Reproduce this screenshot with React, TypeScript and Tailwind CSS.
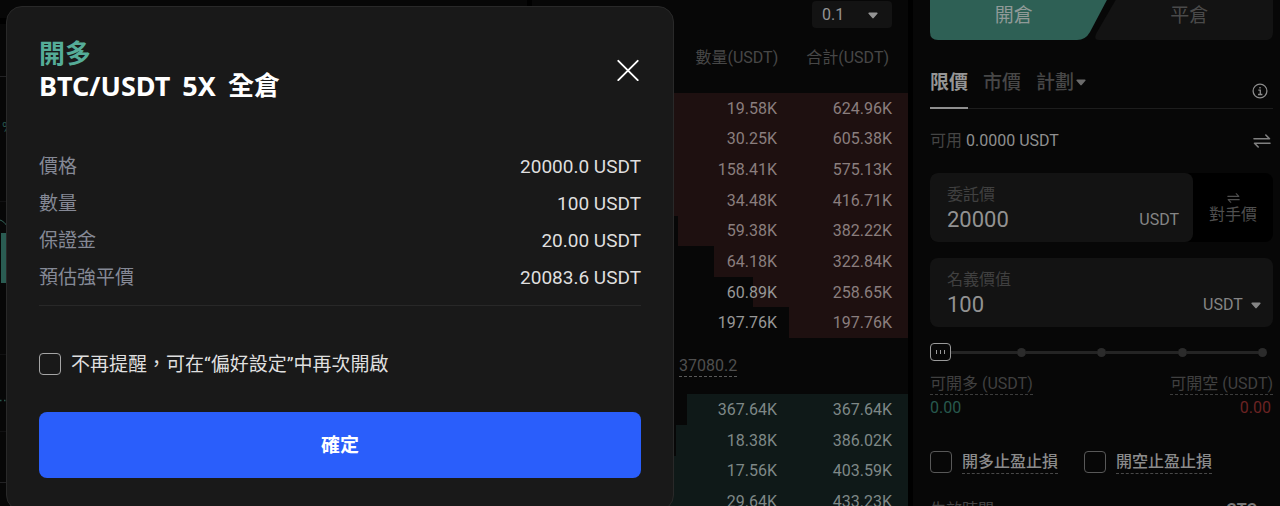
import React, { useId, useState } from 'react';

type Level = { amount: string; total: string; outside?: boolean };

const asks: Level[] = [
  { amount: '19.58K', total: '624.96K' },
  { amount: '30.25K', total: '605.38K' },
  { amount: '158.41K', total: '575.13K' },
  { amount: '34.48K', total: '416.71K' },
  { amount: '59.38K', total: '382.22K' },
  { amount: '64.18K', total: '322.84K' },
  { amount: '60.89K', total: '258.65K', outside: true },
  { amount: '197.76K', total: '197.76K', outside: true },
];

const bids: Level[] = [
  { amount: '367.64K', total: '367.64K' },
  { amount: '18.38K', total: '386.02K' },
  { amount: '17.56K', total: '403.59K' },
  { amount: '29.64K', total: '433.23K' },
];

const DEPTH_SCALE = 626;

function Caret({ className }: { className: string }) {
  return (
    <svg viewBox="0 0 10 7" className={className} fill="currentColor" aria-hidden="true">
      <path d="M1.2 0.4h7.6c.8 0 1.1.8.6 1.4L5.7 6.1c-.4.5-1 .5-1.4 0L.6 1.8C.1 1.2.4.4 1.2.4z" />
    </svg>
  );
}

function SwapIcon({ className, stroke }: { className: string; stroke: number }) {
  return (
    <svg
      viewBox="0 0 18 14"
      className={className}
      fill="none"
      stroke="currentColor"
      strokeWidth={stroke}
      strokeLinecap="round"
      strokeLinejoin="round"
      aria-hidden="true"
    >
      <path d="M1 4.700h15.500L12.800 1" />
      <path d="M17 9.300H1.500L5.200 13" />
    </svg>
  );
}

function CheckBox({ className, id }: { className: string; id: string }) {
  return (
    <input
      type="checkbox"
      id={id}
      className={`size-[22px] shrink-0 appearance-none rounded border bg-transparent checked:bg-[#2a5efb] ${className}`}
    />
  );
}

function DepthTable({ levels, side, className }: { levels: Level[]; side: 'ask' | 'bid'; className: string }) {
  const fill = side === 'ask' ? '#1e1010' : '#0f1918';
  const dim = side === 'ask' ? 'text-[#8a7e7e]' : 'text-[#7e8887]';
  return (
    <table className={`w-full table-fixed border-collapse text-right text-base leading-6 ${className}`}>
      <tbody>
        {levels.map((level) => {
          const pct = Math.min(100, (parseFloat(level.total) / DEPTH_SCALE) * 100);
          return (
            <tr
              key={level.total}
              className={dim}
              style={{ background: `linear-gradient(to left, ${fill} ${pct}%, transparent ${pct}%)` }}
            >
              <td className={`p-0 pt-px ${level.outside ? 'text-[#979797]' : ''}`}>{level.amount}</td>
              <td className="w-[131px] p-0 pt-px pr-4">{level.total}</td>
            </tr>
          );
        })}
      </tbody>
    </table>
  );
}

function ChartPanel() {
  return (
    <section className="flex min-w-0 flex-1 flex-col gap-1.5" aria-label="chart">
      <div className="h-[18px] bg-[#070707]" />
      <div className="flex-1 bg-[#070707]">
        <svg width="40" height="482" viewBox="0 24 40 482" aria-hidden="true">
          <g fill="none" strokeWidth="1">
            <path d="M0 76.500h40M0 482.500h40" stroke="#222224" />
            <path d="M0 201.500h40M0 354.500h40M0 431.500h40" stroke="#111112" />
            <path d="M0 400.500h40" stroke="#28564c" strokeWidth="1.500" strokeDasharray="1.500 2.500" />
            <path d="M0 220c3 1 5 3 7 6" stroke="#35665c" />
          </g>
          <path d="M1 233h8v50H1z" fill="#2a5c52" />
          <text x="2" y="133" fontSize="14" fill="#28564c" fontFamily="Roboto, sans-serif">
            %
          </text>
        </svg>
      </div>
    </section>
  );
}

function OrderBook() {
  return (
    <section className="w-[376px] shrink-0 bg-[#070707]">
      <div className="flex justify-end pt-px pr-4">
        <div className="relative w-20">
          <select
            aria-label="0.1"
            className="h-[27px] w-full appearance-none rounded bg-[#131313] pl-2.5 text-base leading-6 text-[#949494]"
          >
            <option>0.1</option>
          </select>
          <Caret className="pointer-events-none absolute top-[11px] right-3.5 h-[7px] w-2.5 text-[#949494]" />
        </div>
      </div>
      <div className="flex h-[65px] items-start justify-end gap-7 pt-[18px] pr-[19px] text-base leading-6 text-[#474747]">
        <span>數量(USDT)</span>
        <span>合計(USDT)</span>
      </div>
      <DepthTable levels={asks} side="ask" className="h-[245px]" />
      <div className="flex h-14 items-start pt-[18px] pl-[147px] text-base text-[#4f4f4f]">
        <span className="border-b border-dashed border-[#5a5a5a] leading-5">37080.2</span>
      </div>
      <DepthTable levels={bids} side="bid" className="h-[123px]" />
    </section>
  );
}

function OpenCloseTabs() {
  return (
    <div className="relative h-10">
      <svg viewBox="0 0 343 40" preserveAspectRatio="none" className="absolute inset-0 size-full" aria-hidden="true">
        <path d="M0 -4H179L160 32Q155.500 40 147 40H8Q0 40 0 32z" fill="#2e6055" />
        <path d="M188 -4H343V32Q343 40 335 40H169Q163 40 166.500 33z" fill="#131313" />
      </svg>
      <div className="relative grid h-8 grid-cols-2 text-[19px]">
        <button type="button" className="pr-1 text-[#909a98]">開倉</button>
        <button type="button" className="pl-1 text-[#4a4a4a]">平倉</button>
      </div>
    </div>
  );
}

function OrderTypeTabs() {
  return (
    <div className="mt-7 flex h-[41px] items-start border-b border-[#1d1d1d] text-[19px] leading-[30px]">
      <div className="flex h-[41px] flex-1 gap-[15px]">
        <button type="button" className="flex h-full items-start border-b-2 border-[#8f8f8f] font-bold text-[#959595]">
          限價
        </button>
        <button type="button" className="flex items-start font-medium text-[#474747]">市價</button>
        <button type="button" className="flex items-start gap-0.5 font-medium text-[#474747]">
          計劃
          <Caret className="mt-[11px] h-[7px] w-2.5 text-[#6a6a6a]" />
        </button>
      </div>
      <svg
        viewBox="0 0 16 16"
        className="mt-[15px] mr-[5px] size-4 text-[#8b8b8b]"
        fill="none"
        stroke="currentColor"
        strokeWidth="1.300"
        aria-hidden="true"
      >
        <circle cx="8" cy="8" r="6.900" />
        <path d="M6.300 7.200H8.300V11.500M6 11.500h4.400" />
        <path d="M7.300 4.700h1.400" strokeWidth="1.500" />
      </svg>
    </div>
  );
}

function SizeSlider() {
  return (
    <div className="relative mt-[15px] h-5">
      <div className="flex h-full items-center">
        <span className="flex h-[18px] w-[21px] shrink-0 items-center justify-center gap-[3px] rounded border border-[#9a9a9a]">
          <i className="h-1 w-px bg-[#9a9a9a]" />
          <i className="h-1 w-px bg-[#9a9a9a]" />
          <i className="h-1 w-px bg-[#9a9a9a]" />
        </span>
        {[0, 1, 2, 3].map((step) => (
          <span key={step} className={`flex items-center ${step === 0 ? 'flex-[75]' : 'flex-[80]'}`}>
            <i className="h-[3px] flex-1 bg-[#242424]" />
            <i className="size-[9px] rounded-full bg-[#2b2b2b]" />
          </span>
        ))}
        <span className="w-1.5 shrink-0" />
      </div>
      <input type="range" min={0} max={100} defaultValue={0} aria-label="名義價值" className="absolute inset-0 w-full opacity-0" />
    </div>
  );
}

function TradePanel() {
  const id = useId();
  const [price, setPrice] = useState('20000');
  const [size, setSize] = useState('100');
  return (
    <section className="w-[367px] shrink-0 bg-[#070707] pr-[7px] pl-[17px] text-base leading-6">
      <OpenCloseTabs />
      <OrderTypeTabs />

      <div className="mt-5 flex items-center justify-between pr-0.5">
        <span className="text-[#444444]">
          可用 <span className="text-[#8f8f8f]">0.0000 USDT</span>
        </span>
        <SwapIcon className="h-3.5 w-[18px] text-[#808080]" stroke={1.6} />
      </div>

      <div className="mt-5 flex h-[69px] rounded-lg bg-black">
        <div className="flex min-w-0 flex-1 items-end justify-between rounded-lg bg-[#131313] pr-3.5 pl-[17px]">
          <div className="flex h-full flex-col pt-[11px]">
            <label htmlFor={`${id}-price`} className="h-[21px] leading-[22px] text-[#404040]">委託價</label>
            <input
              id={`${id}-price`}
              value={price}
              onChange={(e) => setPrice(e.target.value)}
              className="h-7 w-32 bg-transparent text-[22px] text-[#929292] outline-none"
            />
          </div>
          <span className="mb-2.5 text-[#858585]">USDT</span>
        </div>
        <button type="button" className="flex w-20 flex-col items-center justify-center pt-1 text-[#4f4f4f]">
          <SwapIcon className="h-2.5 w-[13px]" stroke={1.5} />
          <span className="leading-6">對手價</span>
        </button>
      </div>

      <div className="mt-4 flex h-[69px] items-end justify-between rounded-lg bg-[#131313] pr-3 pl-[17px]">
        <div className="flex h-full flex-col pt-[11px]">
          <label htmlFor={`${id}-size`} className="h-[21px] leading-[22px] text-[#404040]">名義價值</label>
          <input
            id={`${id}-size`}
            value={size}
            onChange={(e) => setSize(e.target.value)}
            className="h-7 w-32 bg-transparent text-[22px] text-[#929292] outline-none"
          />
        </div>
        <div className="relative mb-2.5 h-6">
          <select aria-label="USDT" className="h-6 w-[58px] appearance-none bg-transparent text-[#858585]">
            <option>USDT</option>
          </select>
          <Caret className="pointer-events-none absolute top-[9px] right-0 h-[7px] w-2.5 text-[#858585]" />
        </div>
      </div>

      <SizeSlider />

      <div className="mt-3 flex items-start justify-between">
        <div>
          <div className="border-b border-dashed border-[#3c3c3c] leading-5 text-[#404040]">可開多 (USDT)</div>
          <div className="leading-[26px] text-[#27594e]">0.00</div>
        </div>
        <div>
          <div className="border-b border-dashed border-[#3c3c3c] leading-5 text-[#404040]">可開空 (USDT)</div>
          <div className="pr-0.5 text-right leading-[26px] text-[#6b2323]">0.00</div>
        </div>
      </div>

      <div className="mt-[30px] flex gap-[26px]">
        {['開多止盈止損', '開空止盈止損'].map((text) => (
          <div key={text} className="flex items-start gap-2.5">
            <CheckBox id={`${id}-${text}`} className="border-[#585858]" />
            <label htmlFor={`${id}-${text}`} className="border-b border-dashed border-[#484848] leading-[22px] font-medium text-[#8b8b8b]">
              {text}
            </label>
          </div>
        ))}
      </div>

      <div className="mt-6 flex justify-between pr-4">
        <span className="text-[#444444]">生效時間</span>
        <span className="font-bold text-[#777777]">GTC</span>
      </div>
    </section>
  );
}

const summary = [
  ['價格', '20000.0 USDT'],
  ['數量', '100 USDT'],
  ['保證金', '20.00 USDT'],
  ['預估強平價', '20083.6 USDT'],
];

function ConfirmDialog() {
  const id = useId();
  return (
    <div
      role="dialog"
      aria-modal="true"
      aria-labelledby={`${id}-title`}
      className="absolute top-1.5 left-1.5 w-[668px] rounded-2xl border border-[#292929] bg-[#191919] px-8 pt-[31px] pb-8"
    >
      <header className="flex items-center justify-between">
        <h2 id={`${id}-title`} className="text-[26px] leading-8 font-bold text-white">
          <span className="block text-[#55ac98]">開多</span>
          <span className="flex gap-3">
            <span className="font-['Noto_Sans',sans-serif] text-[27px]">BTC/USDT</span>
            <span className="font-['Noto_Sans',sans-serif] text-[27px]">5X</span>
            <span>全倉</span>
          </span>
        </h2>
        <button type="button" aria-label="關閉" className="mr-0.5 size-[22px] text-white">
          <svg viewBox="0 0 22 22" className="size-full" fill="none" stroke="currentColor" strokeWidth="1.900" strokeLinecap="round">
            <path d="M1.300 1.800l19.400 19.400M20.700 1.800L1.300 21.200" />
          </svg>
        </button>
      </header>

      <dl className="mt-[46px] border-b border-[#282828] pb-[9px] text-[19px] leading-[37px]">
        {summary.map(([label, value]) => (
          <div key={label} className="flex justify-between">
            <dt className="text-[#858996]">{label}</dt>
            <dd className="text-[#dfdfdf]">{value}</dd>
          </div>
        ))}
      </dl>

      <div className="mt-[46px] flex items-center gap-2.5 text-[19px] leading-[22px] text-[#dfdfdf]">
        <CheckBox id={`${id}-mute`} className="border-[#a5a5a5]" />
        <label htmlFor={`${id}-mute`} className="pt-0.5">不再提醒，可在“偏好設定”中再次開啟</label>
      </div>

      <button type="button" className="mt-9 h-[66px] w-full rounded-lg bg-[#2a5efb] pt-0.5 text-[19px] font-bold text-white">
        確定
      </button>
    </div>
  );
}

export default function App() {
  return (
    <main
      lang="zh-Hant"
      className="relative flex h-screen gap-[5px] overflow-hidden bg-black font-[Roboto,'Noto_Sans_CJK_TC',sans-serif]"
    >
      <ChartPanel />
      <OrderBook />
      <TradePanel />
      <ConfirmDialog />
    </main>
  );
}
